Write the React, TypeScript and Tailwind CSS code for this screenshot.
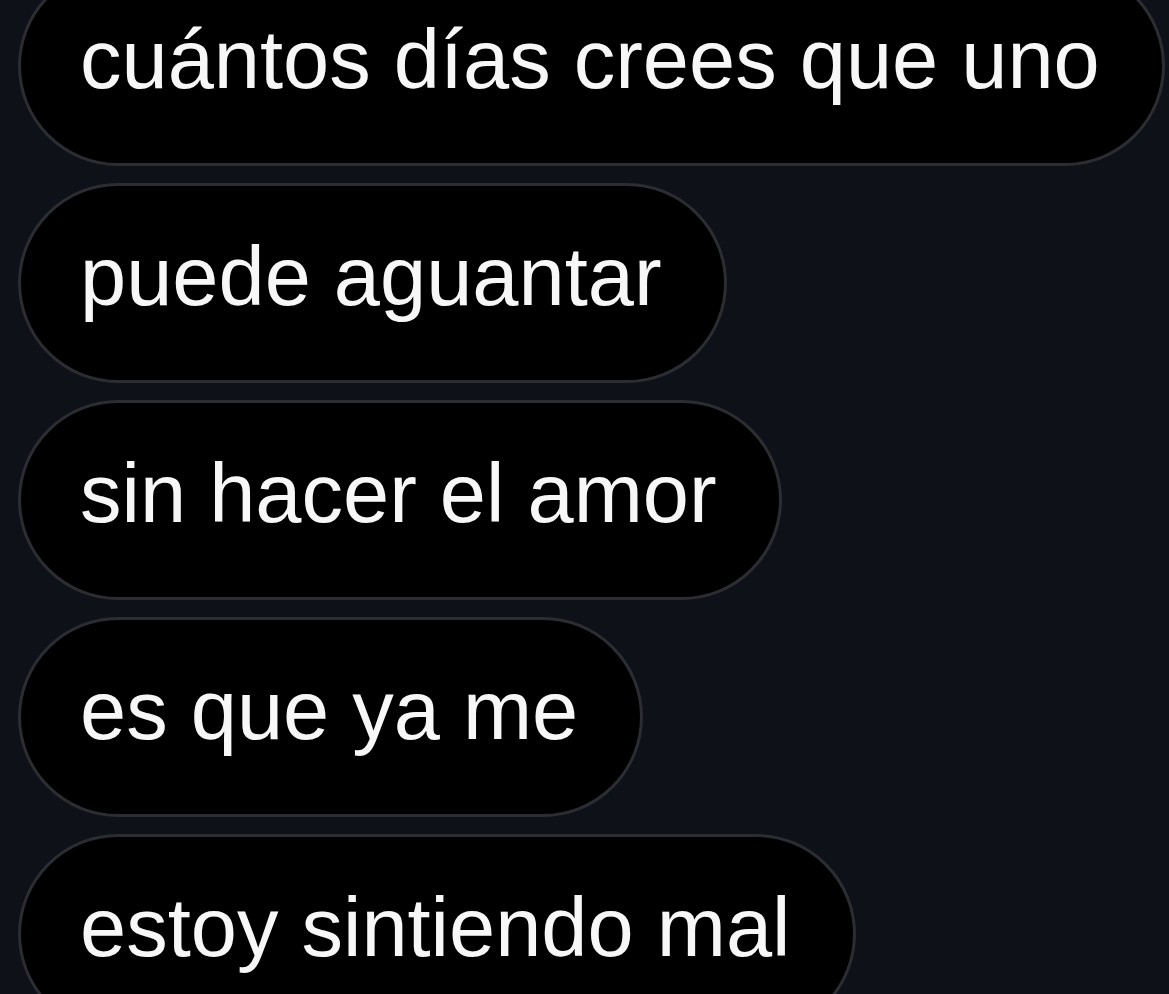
const messages = [
  'cuántos días crees que uno',
  'puede aguantar',
  'sin hacer el amor',
  'es que ya me',
  'estoy sintiendo mal',
];

function Bubble({ text }: { text: string }) {
  return (
    <div className="flex h-[200px] shrink-0 items-center self-start rounded-full border-[3px] border-[#2b2d33] bg-black pl-[59px] pr-[62px]">
      <span className="whitespace-nowrap pb-[14px] text-[83px] leading-none text-[#f7f7f7]">{text}</span>
    </div>
  );
}

export default function App() {
  return (
    <div
      className="h-screen overflow-hidden bg-[#0e1118] pl-[18px]"
      style={{ fontFamily: '"Liberation Sans", Arial, sans-serif' }}
    >
      <div className="-mt-[34px] flex flex-col gap-[17px]">
        {messages.map((m) => (
          <Bubble key={m} text={m} />
        ))}
      </div>
    </div>
  );
}
